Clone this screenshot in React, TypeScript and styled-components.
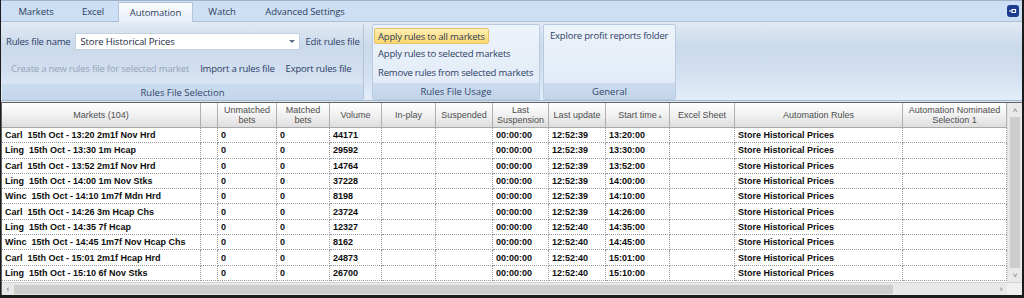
import styled, { createGlobalStyle } from 'styled-components';

const GlobalStyle = createGlobalStyle`
  html, body {
    margin: 0;
    padding: 0;
    background: #1b1b1b;
  }
  * {
    box-sizing: border-box;
  }
`;

// Grid columns, widths in px
const columns = [
  { title: 'Markets (104)', width: 199 },
  { title: '', width: 17 },
  { title: 'Unmatched\nbets', width: 59 },
  { title: 'Matched\nbets', width: 53 },
  { title: 'Volume', width: 52 },
  { title: 'In-play', width: 54 },
  { title: 'Suspended', width: 57 },
  { title: 'Last\nSuspension', width: 56 },
  { title: 'Last update', width: 57 },
  { title: 'Start time', width: 64, sorted: true },
  { title: 'Excel Sheet', width: 65 },
  { title: 'Automation Rules', width: 168 },
  { title: 'Automation Nominated\nSelection 1', width: 104 },
];

const markets = [
  ['Carl  15th Oct - 13:20 2m1f Nov Hrd', '44171', '12:52:39', '13:20:00'],
  ['Ling  15th Oct - 13:30 1m Hcap', '29592', '12:52:39', '13:30:00'],
  ['Carl  15th Oct - 13:52 2m1f Nov Hrd', '14764', '12:52:39', '13:52:00'],
  ['Ling  15th Oct - 14:00 1m Nov Stks', '37228', '12:52:39', '14:00:00'],
  ['Winc  15th Oct - 14:10 1m7f Mdn Hrd', '8198', '12:52:39', '14:10:00'],
  ['Carl  15th Oct - 14:26 3m Hcap Chs', '23724', '12:52:39', '14:26:00'],
  ['Ling  15th Oct - 14:35 7f Hcap', '12327', '12:52:40', '14:35:00'],
  ['Winc  15th Oct - 14:45 1m7f Nov Hcap Chs', '8162', '12:52:40', '14:45:00'],
  ['Carl  15th Oct - 15:01 2m1f Hcap Hrd', '24873', '12:52:40', '15:01:00'],
  ['Ling  15th Oct - 15:10 6f Nov Stks', '26700', '12:52:40', '15:10:00'],
];

const gridTemplate = columns.map((c) => `${c.width}px`).join(' ');

const uiFont = `"Open Sans", "Noto Sans", sans-serif`;
const gridFont = `"Liberation Sans", Arial, sans-serif`;

// Outer window frame
const Frame = styled.div`
  width: 1024px;
  height: 298px;
  padding: 0 2px 3px 1px;
  background: #1b1b1b;
  overflow: hidden;
`;

const Window = styled.div`
  display: flex;
  flex-direction: column;
  height: 100%;
  background: #d7e4f3;
`;

// Tab strip
const TabBar = styled.div`
  display: flex;
  align-items: flex-end;
  height: 21px;
  padding-left: 3px;
  background: #cddff4;
  border-top: 1px solid #9fb2c8;
  font-family: ${uiFont};
  font-size: 9.5px;
  color: #2c3e5e;
  position: relative;
`;

const Tab = styled.div<{ $active?: boolean; $w: number }>`
  width: ${(p) => p.$w}px;
  height: 19px;
  display: flex;
  align-items: center;
  justify-content: center;
  letter-spacing: -0.1px;
  ${(p) =>
    p.$active &&
    `
    background: linear-gradient(#fbfcfe, #e6eef8);
    border: 1px solid #b4c5da;
    border-bottom: none;
    margin-bottom: -1px;
    height: 20px;
    position: relative;
    z-index: 1;
  `}
`;

const PinButton = styled.div`
  position: absolute;
  right: 3px;
  top: 4px;
  width: 12px;
  height: 12px;
  border-radius: 3px;
  background: #1c3d8f;
  display: flex;
  align-items: center;
  justify-content: center;
`;

// Ribbon
const Ribbon = styled.div`
  display: flex;
  height: 80px;
  padding: 2px 0 0 1px;
  background: linear-gradient(#e2eaf4 0%, #cbdaeb 30%, #d0deef 60%, #e3edf9 100%);
  border-top: 1px solid #b0c0d4;
  border-bottom: 1px solid #a9b9cd;
  font-family: ${uiFont};
  font-size: 9.5px;
  color: #2d4066;
`;

const Group = styled.div<{ $w: number; $framed?: boolean; $gap?: number }>`
  width: ${(p) => p.$w}px;
  margin-left: ${(p) => p.$gap ?? 0}px;
  display: flex;
  flex-direction: column;
  border-radius: 2px;
  ${(p) =>
    p.$framed
      ? `
    background: linear-gradient(#edf3fa, #dfe9f6);
    border: 1px solid #b9cbe0;
  `
      : `
    border-right: 1px solid #b3c4d8;
  `}
`;

const GroupBody = styled.div<{ $pad?: string }>`
  flex: 1;
  display: flex;
  flex-direction: column;
  padding: ${(p) => p.$pad || '0'};
`;

const GroupLabel = styled.div`
  height: 16px;
  display: flex;
  align-items: center;
  justify-content: center;
  background: linear-gradient(#ccdcef, #c3d5ea);
  color: #33476b;
`;

const RibbonRow = styled.div<{ $gap?: number; $h?: number; $indent?: number }>`
  display: flex;
  align-items: center;
  gap: ${(p) => p.$gap ?? 8}px;
  height: ${(p) => p.$h ?? 19}px;
  padding-left: ${(p) => p.$indent ?? 0}px;
  white-space: nowrap;
`;

const RibbonLink = styled.span<{ $disabled?: boolean }>`
  color: ${(p) => (p.$disabled ? '#97a5b9' : '#2d4066')};
  letter-spacing: -0.2px;
`;

const Combo = styled.div`
  width: 225px;
  height: 17px;
  display: flex;
  align-items: center;
  justify-content: space-between;
  padding: 0 4px;
  background: #fff;
  border: 1px solid #c3d0e0;
  color: #1e2a3e;
  letter-spacing: -0.1px;
`;

const ComboArrow = styled.span`
  width: 0;
  height: 0;
  border-left: 3px solid transparent;
  border-right: 3px solid transparent;
  border-top: 3px solid #5a6b82;
`;

const HotButton = styled.div`
  align-self: flex-start;
  padding: 0 3px;
  height: 16px;
  display: flex;
  align-items: center;
  background: linear-gradient(#fdeeb3, #fcd96c);
  border: 1px solid #e3c36a;
  border-radius: 2px;
  color: #2d4066;
  letter-spacing: -0.2px;
`;

// Data grid
const GridArea = styled.div`
  flex: 1;
  margin-top: 1px;
  display: flex;
  flex-direction: column;
  background: #fff;
  border: 1px solid #646464;
  border-right: none;
  border-bottom: none;
  font-family: ${gridFont};
`;

const GridMain = styled.div`
  flex: 1;
  display: flex;
`;

const Table = styled.div`
  flex: 1;
  display: flex;
  flex-direction: column;
`;

const HeaderRow = styled.div`
  display: grid;
  grid-template-columns: ${gridTemplate};
  height: 25px;
  background: linear-gradient(#ffffff, #f1f1f1 50%, #dedede);
  border-bottom: 1px solid #a8a8a8;
`;

const HeaderCell = styled.div`
  display: flex;
  align-items: center;
  justify-content: center;
  text-align: center;
  white-space: pre;
  line-height: 10px;
  font-size: 9px;
  color: #4e4e4e;
  border-right: 1px solid #b0b0b0;
  position: relative;
`;

const SortMark = styled.span`
  position: absolute;
  right: 6px;
  top: 8px;
  font-size: 6px;
  color: #9a9a9a;
`;

const DataRow = styled.div`
  display: grid;
  grid-template-columns: ${gridTemplate};
  height: 15.3px;
`;

const DataCell = styled.div`
  display: flex;
  align-items: center;
  padding-left: 3px;
  white-space: pre;
  font-size: 9px;
  font-weight: bold;
  color: #0c0c0c;
  border-right: 1px dotted #9a9a9a;
  border-bottom: 1px dotted #9a9a9a;
  overflow: hidden;
`;

const VScroll = styled.div`
  width: 15px;
  display: flex;
  flex-direction: column;
  background: #e9e9e9;
  border-left: 1px solid #e0e0e0;
`;

const ScrollArrow = styled.div`
  height: 14px;
  display: flex;
  align-items: center;
  justify-content: center;
  font-size: 8px;
  color: #7a7a7a;
  font-family: ${gridFont};
`;

const VThumb = styled.div`
  flex: 1;
  margin: 0 2px;
  background: #cdcdcd;
`;

const HScrollRow = styled.div`
  height: 13px;
  display: flex;
  background: #e8e8e8;
  border-top: 1px solid #d4d4d4;
`;

const HTrack = styled.div`
  flex: 1;
  display: flex;
  align-items: center;
`;

const HThumb = styled.div`
  width: 879px;
  height: 9px;
  background: #cdcdcd;
`;

const Spacer = styled.div`
  flex: 1;
`;

const Corner = styled.div`
  width: 15px;
  background: #f0f0f0;
`;

const ArrowSlot = styled.div`
  width: 12px;
  display: flex;
  align-items: center;
  justify-content: center;
  font-size: 9px;
  color: #6e6e6e;
`;

const tabs = [
  { label: 'Markets', w: 64 },
  { label: 'Excel', w: 50 },
  { label: 'Automation', w: 75, active: true },
  { label: 'Watch', w: 58 },
  { label: 'Advanced Settings', w: 108 },
];

export default function App() {
  return (
    <>
      <GlobalStyle />
      <Frame>
        <Window>
          <TabBar>
            {tabs.map((t) => (
              <Tab key={t.label} $w={t.w} $active={t.active}>
                {t.label}
              </Tab>
            ))}
            <PinButton>
              <svg width="8" height="6" viewBox="0 0 8 6">
                <path d="M0 3h3M3 1v4M3 1.5h3.5v3H3" stroke="#fff" strokeWidth="1.2" fill="none" />
              </svg>
            </PinButton>
          </TabBar>

          <Ribbon>
            <Group $w={362}>
              <GroupBody $pad="8px 0 0 4px">
                <RibbonRow $gap={5}>
                  <RibbonLink>Rules file name</RibbonLink>
                  <Combo>
                    <span>Store Historical Prices</span>
                    <ComboArrow />
                  </Combo>
                  <RibbonLink>Edit rules file</RibbonLink>
                </RibbonRow>
                <RibbonRow $gap={11} $indent={5} style={{ marginTop: 8 }}>
                  <RibbonLink $disabled>Create a new rules file for selected market</RibbonLink>
                  <RibbonLink>Import a rules file</RibbonLink>
                  <RibbonLink>Export rules file</RibbonLink>
                </RibbonRow>
              </GroupBody>
              <GroupLabel>Rules File Selection</GroupLabel>
            </Group>

            <Group $w={168} $gap={8} $framed>
              <GroupBody $pad="3px 0 0 1px">
                <HotButton>Apply rules to all markets</HotButton>
                <RibbonRow $h={19} $indent={4}>
                  <RibbonLink>Apply rules to selected markets</RibbonLink>
                </RibbonRow>
                <RibbonRow $h={19} $indent={4}>
                  <RibbonLink>Remove rules from selected markets</RibbonLink>
                </RibbonRow>
              </GroupBody>
              <GroupLabel>Rules File Usage</GroupLabel>
            </Group>

            <Group $w={133} $gap={3} $framed>
              <GroupBody $pad="1px 0 0 6px">
                <RibbonRow>
                  <RibbonLink>Explore profit reports folder</RibbonLink>
                </RibbonRow>
              </GroupBody>
              <GroupLabel>General</GroupLabel>
            </Group>
          </Ribbon>

          <GridArea>
            <GridMain>
              <Table>
                <HeaderRow>
                  {columns.map((c, i) => (
                    <HeaderCell key={i}>
                      {c.title}
                      {c.sorted && <SortMark>▲</SortMark>}
                    </HeaderCell>
                  ))}
                </HeaderRow>
                {markets.map(([name, volume, update, start]) => (
                  <DataRow key={name}>
                    <DataCell>{name}</DataCell>
                    <DataCell />
                    <DataCell>0</DataCell>
                    <DataCell>0</DataCell>
                    <DataCell>{volume}</DataCell>
                    <DataCell />
                    <DataCell />
                    <DataCell>00:00:00</DataCell>
                    <DataCell>{update}</DataCell>
                    <DataCell>{start}</DataCell>
                    <DataCell />
                    <DataCell>Store Historical Prices</DataCell>
                    <DataCell />
                  </DataRow>
                ))}
              </Table>
              <VScroll>
                <ScrollArrow>˄</ScrollArrow>
                <VThumb />
                <ScrollArrow>˅</ScrollArrow>
              </VScroll>
            </GridMain>
            <HScrollRow>
              <HTrack>
                <ArrowSlot>‹</ArrowSlot>
                <HThumb />
                <Spacer />
                <ArrowSlot>›</ArrowSlot>
              </HTrack>
              <Corner />
            </HScrollRow>
          </GridArea>
        </Window>
      </Frame>
    </>
  );
}
